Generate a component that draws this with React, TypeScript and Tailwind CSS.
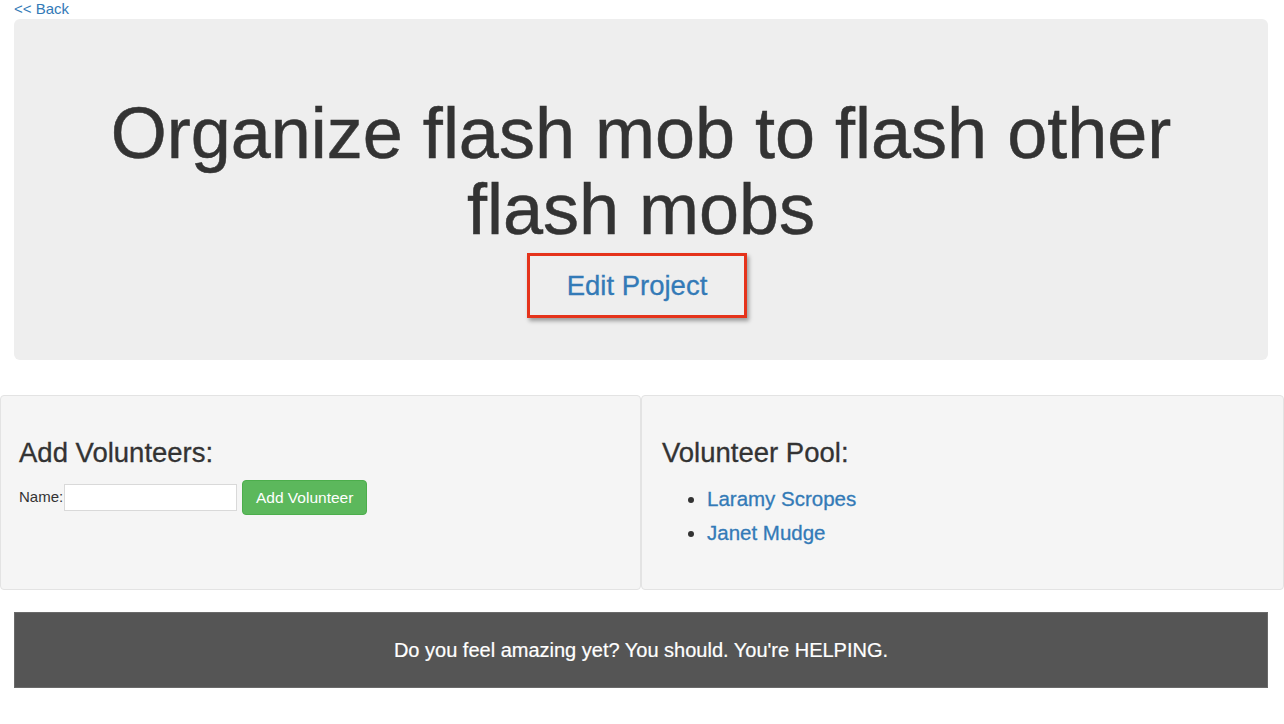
import React from 'react';

const volunteers = ['Laramy Scropes', 'Janet Mudge'];

export default function App() {
  return (
    <div className="min-h-[724px] bg-white text-[#333] font-['Liberation_Sans',Arial,sans-serif]">
      {/* back link */}
      <div className="px-[14px] h-[19px]">
        <a href="#" className="block text-[15px] leading-[17px] text-[#337ab7]">
          &lt;&lt; Back
        </a>
      </div>

      {/* jumbotron */}
      <div className="ml-[14px] mr-[16px] rounded-[6px] bg-[#eeeeee] pt-[76px] pb-[42px] text-center">
        <h1 className="mx-auto max-w-[1120px] text-[72px] leading-[76px] [-webkit-text-stroke:0.5px_#333]">
          Organize flash mob to flash other flash mobs
        </h1>
        <div className="mt-[6px] flex justify-center pr-[8px]">
          <a
            href="#"
            className="flex h-[65px] w-[220px] items-center justify-center border-[3px] border-[#e5331b] text-[27.5px] text-[#337ab7] shadow-[2px_3px_4px_rgba(0,0,0,0.35)] [-webkit-text-stroke:0.3px_#337ab7]"
          >
            Edit Project
          </a>
        </div>
      </div>

      {/* volunteer panels */}
      <div className="mt-[35px] grid grid-cols-[641px_643px]">
        <div className="h-[195px] rounded-[4px] border border-[#e3e3e3] bg-[#f5f5f5] pl-[18px] pt-[42px]">
          <h3 className="text-[27.5px] leading-[30px] [-webkit-text-stroke:0.3px_#333]">Add Volunteers:</h3>
          <form className="mt-[12px] flex items-center text-[15px]" onSubmit={(e) => e.preventDefault()}>
            <label className="mr-px">Name:</label>
            <input
              type="text"
              className="h-[27px] w-[173px] border border-[#d9d9d9] bg-white px-1 outline-none"
            />
            <button
              type="submit"
              className="ml-[5px] h-[35px] w-[125px] rounded-[4px] border border-[#4cae4c] bg-[#5cb85c] text-[15.5px] text-white"
            >
              Add Volunteer
            </button>
          </form>
        </div>
        <div className="h-[195px] rounded-[4px] border border-[#e3e3e3] bg-[#f5f5f5] pl-[20px] pt-[42px]">
          <h3 className="text-[27.5px] leading-[30px] [-webkit-text-stroke:0.3px_#333]">Volunteer Pool:</h3>
          <ul className="mt-[14px] list-disc pl-[45px] text-[20.5px] leading-[34px]">
            {volunteers.map((v) => (
              <li key={v}>
                <a href="#" className="text-[#337ab7] [-webkit-text-stroke:0.3px_#337ab7]">
                  {v}
                </a>
              </li>
            ))}
          </ul>
        </div>
      </div>

      {/* footer */}
      <div className="ml-[14px] mr-[16px] mt-[22px] flex h-[76px] items-center justify-center border border-[#6a6a6a] bg-[#555555] text-[20px] text-white [-webkit-text-stroke:0.2px_#fff]">
        Do you feel amazing yet? You should. You're HELPING.
      </div>
    </div>
  );
}
